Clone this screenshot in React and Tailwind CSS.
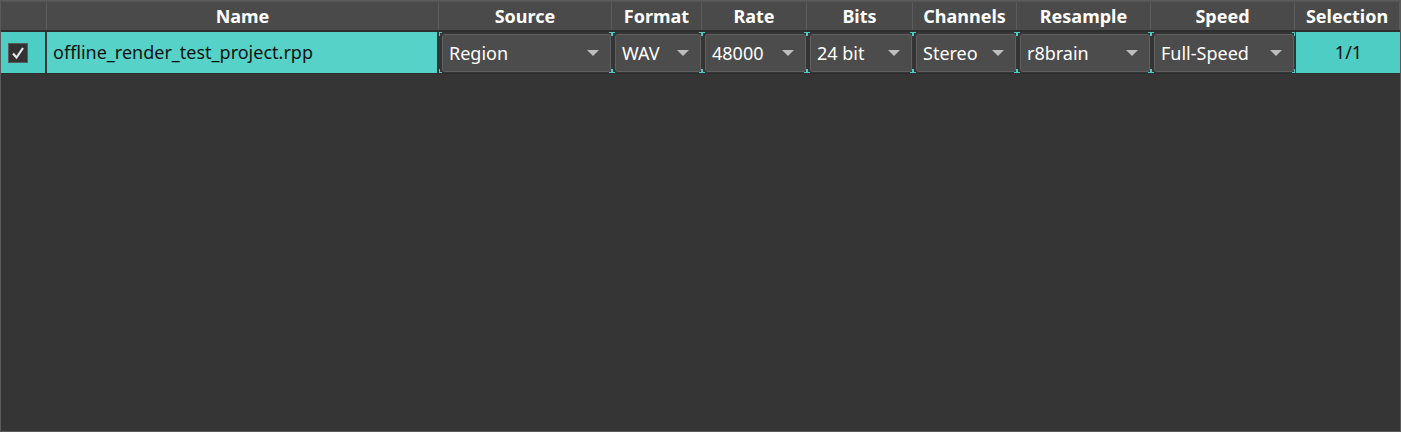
import React from "react";

const cols = [
  { key: "chk", label: "", w: 46 },
  { key: "name", label: "Name", w: 392 },
  { key: "source", label: "Source", w: 173 },
  { key: "format", label: "Format", w: 90 },
  { key: "rate", label: "Rate", w: 105 },
  { key: "bits", label: "Bits", w: 106 },
  { key: "channels", label: "Channels", w: 104 },
  { key: "resample", label: "Resample", w: 134 },
  { key: "speed", label: "Speed", w: 144 },
  { key: "selection", label: "Selection", w: 105 },
];

const combos = {
  source: "Region",
  format: "WAV",
  rate: "48000",
  bits: "24 bit",
  channels: "Stereo",
  resample: "r8brain",
  speed: "Full-Speed",
};

function Corners() {
  return (
    <>
      <span className="absolute left-0 top-0 w-[1px] h-[4px] bg-[#4ecdc4]" />
      <span className="absolute left-0 top-0 w-[3px] h-[1px] bg-[#4ecdc4]" />
      <span className="absolute right-0 top-0 w-[1px] h-[4px] bg-[#4ecdc4]" />
      <span className="absolute right-0 top-0 w-[3px] h-[1px] bg-[#4ecdc4]" />
      <span className="absolute left-0 bottom-0 w-[1px] h-[4px] bg-[#4ecdc4]" />
      <span className="absolute left-0 bottom-0 w-[3px] h-[1px] bg-[#4ecdc4]" />
      <span className="absolute right-0 bottom-0 w-[1px] h-[4px] bg-[#4ecdc4]" />
      <span className="absolute right-0 bottom-0 w-[3px] h-[1px] bg-[#4ecdc4]" />
    </>
  );
}

function Combo({ value }) {
  return (
    <div className="relative h-full pl-[3px] pr-[1px] pt-[2px] pb-[1px]">
      <Corners />
      <div className="h-full flex items-center justify-between rounded-[3px] border border-[#606060] bg-[#4c4c4c] pl-[6px] pr-[11px]">
        <span className="text-[18px] text-white leading-none">{value}</span>
        <svg width="12" height="7" viewBox="0 0 12 7">
          <polygon points="0,0 12,0 6,6" fill="#bdbdbd" />
        </svg>
      </div>
    </div>
  );
}

export default function App() {
  return (
    <div
      className="w-[1401px] h-[432px] bg-[#353535] border border-[#5a5a5a] overflow-hidden"
      style={{ fontFamily: '"Microsoft YaHei", "Noto Sans", "Open Sans", sans-serif' }}
    >
      <div className="flex h-[31px] bg-[#4a4a4a] border-t border-[#555] border-b-2 border-b-[#2e2e2e]">
        {cols.map((c) => (
          <div
            key={c.key}
            style={{ width: c.w }}
            className="shrink-0 flex items-center justify-center border-r border-[#5c5c5c] text-white font-bold text-[18px] leading-none"
          >
            {c.label}
          </div>
        ))}
      </div>
      <div className="flex h-[42px] border-b border-[#2e2e2e]">
        {cols.map((c) => {
          if (c.key === "chk")
            return (
              <div
                key={c.key}
                style={{ width: c.w }}
                className="shrink-0 bg-[#4ecdc4] border-r-2 border-[#353535] flex items-center pl-[7px]"
              >
                <div className="w-[20px] h-[20px] bg-[#333] border border-[#5a5a5a] flex items-center justify-center">
                  <svg width="14" height="14" viewBox="0 0 14 14">
                    <path d="M2 7.5 L5.5 11.5 L12 2" stroke="#e8e8e8" strokeWidth="2.2" fill="none" />
                  </svg>
                </div>
              </div>
            );
          if (c.key === "name")
            return (
              <div
                key={c.key}
                style={{ width: c.w }}
                className="shrink-0 bg-[#56d2c8] flex items-center pl-[6px] text-[18px] text-[#111] border-r-2 border-[#353535]"
              >
                offline_render_test_project.rpp
              </div>
            );
          if (c.key === "selection")
            return (
              <div
                key={c.key}
                style={{ width: c.w }}
                className="shrink-0 bg-[#4ecdc4] flex items-center justify-center text-[18px] text-[#111] ml-[1px]"
              >
                1/1
              </div>
            );
          return (
            <div key={c.key} style={{ width: c.w }} className="shrink-0">
              <Combo value={combos[c.key]} />
            </div>
          );
        })}
      </div>
    </div>
  );
}
